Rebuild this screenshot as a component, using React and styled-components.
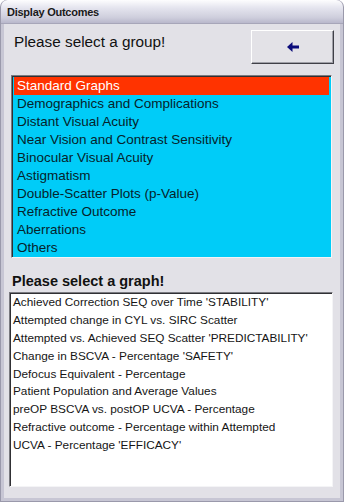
import React from "react";
import styled, { createGlobalStyle } from "styled-components";

const Global = createGlobalStyle`
  html, body { margin: 0; padding: 0; background: #ffffff; }
  body { font-family: "Liberation Sans", Arial, sans-serif; }
  #root { width: 344px; height: 502px; }
`;

const Window = styled.div`
  box-sizing: border-box;
  width: 344px;
  height: 502px;
  display: flex;
  flex-direction: column;
  background: #e2e1e7;
  border: 1px solid #9a99ab;
  border-top: none;
  border-radius: 7px 7px 0 0;
  box-shadow: inset 3px 0 0 #c7c6d4, inset -3px 0 0 #c7c6d4, inset 0 -3px 0 #c7c6d4;
  overflow: hidden;
`;

const TitleBar = styled.div`
  height: 24px;
  flex: none;
  display: flex;
  align-items: center;
  padding-left: 6px;
  padding-top: 1px;
  box-sizing: border-box;
  background: linear-gradient(#fdfdfe 0%, #e4e4ee 35%, #cfcfdd 75%, #b9b8cc 100%);
  border-bottom: 1px solid #a7a6b9;
  border-radius: 7px 7px 0 0;
  font-family: "Liberation Sans", Arial, sans-serif;
  font-weight: bold;
  font-size: 11px;
  letter-spacing: -0.25px;
  color: #1a1a1a;
`;

const Body = styled.div`
  flex: 1;
  display: flex;
  flex-direction: column;
  padding: 6px 11px 8px 8px;
`;

const HeaderRow = styled.div`
  display: flex;
  justify-content: space-between;
  align-items: flex-start;
  height: 45px;
`;

const Label = styled.div`
  font-size: ${(p) => p.$size}px;
  font-weight: ${(p) => (p.$bold ? "bold" : "normal")};
  color: #111;
  padding-left: ${(p) => p.$indent}px;
  padding-top: ${(p) => p.$top}px;
`;

const Button = styled.button`
  box-sizing: border-box;
  width: 83px;
  height: 34px;
  background: #e3e2e7;
  border: 1px solid;
  border-color: #ffffff #404048 #404048 #ffffff;
  box-shadow: inset -1px -1px 0 #a0a0a8;
  display: flex;
  align-items: center;
  justify-content: center;
  padding: 0;
  margin-right: -2px;
`;

const List = styled.div`
  box-sizing: border-box;
  background: ${(p) => p.$bg};
  border: 1px solid;
  border-color: #7a7a80 #f4f4f6 #f4f4f6 #7a7a80;
  box-shadow: inset 1px 1px 0 #303034;
  height: ${(p) => p.$h}px;
  margin: ${(p) => p.$mt}px ${(p) => p.$mr}px 0 ${(p) => p.$ml}px;
  padding: ${(p) => p.$pt}px 2px 0;
  display: flex;
  flex-direction: column;
`;

const GroupItem = styled.div`
  height: 18px;
  line-height: 18px;
  font-size: 13.5px;
  padding-left: 3px;
  white-space: nowrap;
  color: ${(p) => (p.$sel ? "#ffffff" : "#06232b")};
  background: ${(p) => (p.$sel ? "#ff3300" : "transparent")};
`;

const GraphItem = styled.div`
  height: 17.9px;
  line-height: 18px;
  font-size: 11.8px;
  padding-left: 1px;
  white-space: nowrap;
  color: #151515;
`;

const groups = [
  "Standard Graphs",
  "Demographics and Complications",
  "Distant Visual Acuity",
  "Near Vision and Contrast Sensitivity",
  "Binocular Visual Acuity",
  "Astigmatism",
  "Double-Scatter Plots (p-Value)",
  "Refractive Outcome",
  "Aberrations",
  "Others",
];

const graphs = [
  "Achieved Correction SEQ over Time 'STABILITY'",
  "Attempted change in CYL vs. SIRC Scatter",
  "Attempted vs. Achieved SEQ Scatter 'PREDICTABILITY'",
  "Change in BSCVA - Percentage 'SAFETY'",
  "Defocus Equivalent - Percentage",
  "Patient Population and Average Values",
  "preOP BSCVA vs. postOP UCVA - Percentage",
  "Refractive outcome - Percentage within Attempted",
  "UCVA - Percentage 'EFFICACY'",
];

const BackArrow = () => (
  <svg width="12" height="10" viewBox="0 0 12 10">
    <polygon points="0,5 5.5,0 5.5,10" fill="#0b0b7a" />
    <rect x="5" y="3.5" width="7" height="3" fill="#0b0b7a" />
  </svg>
);

export default function App() {
  return (
    <>
      <Global />
      <Window>
        <TitleBar>Display Outcomes</TitleBar>
        <Body>
          <HeaderRow>
            <Label $size={15.3} $indent={5} $top={3}>Please select a group!</Label>
            <Button><BackArrow /></Button>
          </HeaderRow>
          <List $bg="#00ccf8" $h={183} $ml={2} $mr={0} $mt={0} $pt={1}>
            {groups.map((g, i) => (
              <GroupItem key={g} $sel={i === 0}>{g}</GroupItem>
            ))}
          </List>
          <Label $size={14.5} $bold $indent={3} $top={15}>Please select a graph!</Label>
          <List $bg="#ffffff" $h={195} $ml={0} $mr={-1} $mt={3} $pt={0}>
            {graphs.map((g) => (
              <GraphItem key={g}>{g}</GraphItem>
            ))}
          </List>
        </Body>
      </Window>
    </>
  );
}
